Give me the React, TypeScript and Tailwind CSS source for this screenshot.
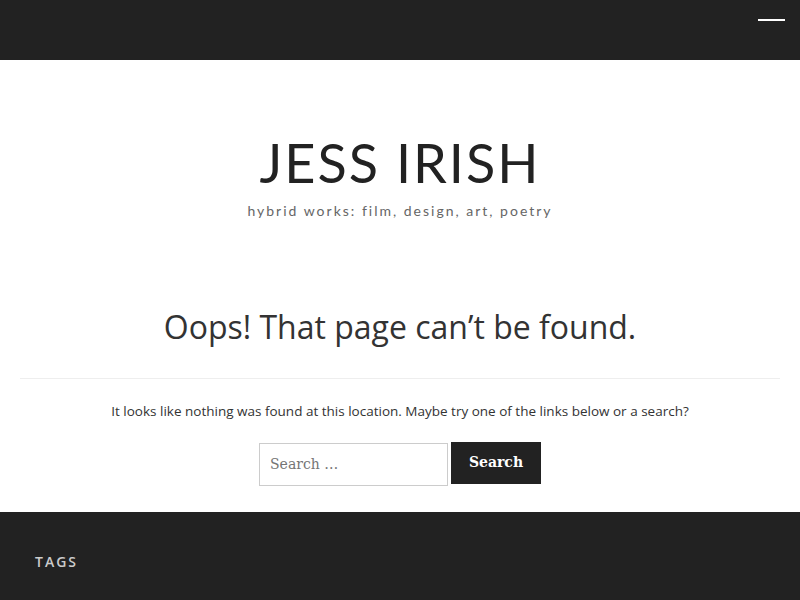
import React from "react";

export default function App() {
  return (
    <div className="w-[800px] min-h-[600px] bg-white flex flex-col">
      <header className="h-[60px] bg-[#222222] flex items-start justify-end pr-[15px]">
        <div className="mt-[19px] w-[27px] h-[2px] bg-white" />
      </header>
      <div className="flex flex-col items-center pt-[76px]">
        <h1
          className="text-[54px] leading-none font-normal tracking-[2px] text-[#222222]"
          style={{ fontFamily: '"Lato", "Noto Sans", sans-serif' }}
        >
          JESS IRISH
        </h1>
        <p
          className="mt-[14px] text-[14px] leading-none tracking-[2px] text-[#666666]"
          style={{ fontFamily: '"Lato", "Noto Sans", sans-serif' }}
        >
          hybrid works: film, design, art, poetry
        </p>
      </div>
      <main className="px-[20px] pt-[93px] flex flex-col items-center">
        <h2
          className="text-[32px] leading-none text-[#333333]"
          style={{ fontFamily: '"Open Sans", "Noto Sans", sans-serif' }}
        >
          Oops! That page can’t be found.
        </h2>
        <div className="mt-[35px] w-full h-px bg-[#eeeeee]" />
        <p
          className="mt-[26px] text-[13.5px] leading-none text-[#333333]"
          style={{ fontFamily: '"Open Sans", "Noto Sans", sans-serif' }}
        >
          It looks like nothing was found at this location. Maybe try one of the links below or a search?
        </p>
        <form className="mt-[24px] flex items-start gap-[3px] pb-[26px]">
          <input
            type="search"
            placeholder="Search …"
            className="w-[189px] h-[43px] border border-[#cccccc] px-[10px] text-[14px] text-[#333] placeholder:text-[#757575] outline-none"
            style={{ fontFamily: '"DejaVu Serif", "Liberation Serif", serif' }}
          />
          <button
            type="button"
            className="-mt-px w-[90px] h-[42px] bg-[#222222] text-white text-[14px] font-bold"
            style={{ fontFamily: '"DejaVu Serif", "Liberation Serif", serif' }}
          >
            Search
          </button>
        </form>
      </main>
      <footer className="flex-1 bg-[#222222] px-[35px] pt-[43px] pb-[30px]">
        <h3
          className="text-[14px] leading-none font-semibold tracking-[2px] text-[#cccccc]"
          style={{ fontFamily: '"Open Sans", "Noto Sans", sans-serif' }}
        >
          TAGS
        </h3>
      </footer>
    </div>
  );
}
